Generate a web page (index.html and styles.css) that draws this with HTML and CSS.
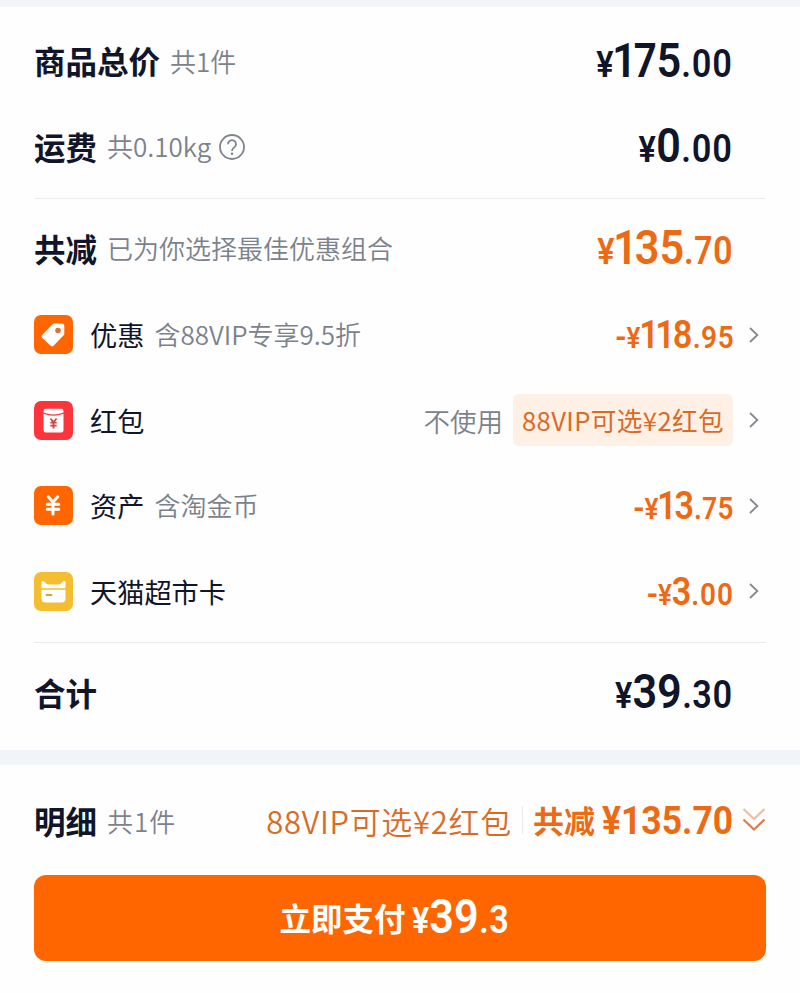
FILE: index.html
```html
<!DOCTYPE html>
<html lang="zh-CN">
<head>
  <meta charset="UTF-8">
  <title>确认订单</title>
  <link rel="stylesheet" href="styles.css">
</head>
<body>
  <!-- Price summary -->
  <div class="summary">
    <div class="row">
      <h2>商品总价</h2>
      <span class="note">共1件</span>
      <div class="price"><span class="yen">¥</span><span class="int">175</span><span class="dec">.00</span></div>
    </div>
    <div class="row">
      <h2>运费</h2>
      <span class="note">共0.10kg</span>
      <svg class="help" viewBox="0 0 26 26">
        <circle cx="13" cy="13" r="12"/>
        <path d="M9 10.200a4 4 0 1 1 6.200 3.300c-1.500 1-2.200 1.700-2.200 3.500"/>
        <circle class="dot" cx="13" cy="19.700" r="1.300"/>
      </svg>
      <div class="price"><span class="yen">¥</span><span class="int">0</span><span class="dec">.00</span></div>
    </div>
    <hr>
    <div class="row">
      <h2>共减</h2>
      <span class="note">已为你选择最佳优惠组合</span>
      <div class="price orange"><span class="yen">¥</span><span class="int">135</span><span class="dec">.70</span></div>
    </div>

    <!-- Discount items -->
    <div class="row item">
      <svg class="icon" viewBox="0 0 39 39">
        <rect width="39" height="39" rx="7" fill="#ff6600"/>
        <path d="M20.500 8.500h7.200a2.600 2.600 0 0 1 2.600 2.600v7.300a3 3 0 0 1-.9 2.100l-9.600 10a2.400 2.400 0 0 1-3.400 0l-8.200-7.400a2.200 2.200 0 0 1 0-3.200l10.100-10.500a3 3 0 0 1 2.200-.9z" fill="#fff"/>
        <circle cx="24" cy="15.500" r="2.800" fill="#e0703a"/>
      </svg>
      <h3>优惠</h3>
      <span class="note">含88VIP专享9.5折</span>
      <div class="price small orange"><span class="minus">-</span><span class="yen">¥</span><span class="int">118</span><span class="dec">.95</span></div>
      <svg class="arrow" viewBox="0 0 10 16"><path d="M1 1l7.400 7L1 15"/></svg>
    </div>
    <div class="row item">
      <svg class="icon" viewBox="0 0 39 39">
        <rect width="39" height="39" rx="7" fill="#fc343c"/>
        <path d="M9.500 11.500V10q0-2.200 2.200-2.200h15.600q2.200 0 2.200 2.200v1.500q-10 4-20 0z" fill="#fff"/>
        <path d="M9.500 12.700q10 4 20 0v16.600q0 2.200-2.200 2.200H11.700q-2.200 0-2.200-2.200z" fill="#fff"/>
        <path d="M16.400 17.500l3.100 3.600 3.100-3.600M19.500 21v6.600M16.300 21.600h6.400M16.300 24.600h6.400" fill="none" stroke="#d94345" stroke-width="1.800"/>
      </svg>
      <h3>红包</h3>
      <span class="unused">不使用</span>
      <span class="tag">88VIP可选¥2红包</span>
      <svg class="arrow" viewBox="0 0 10 16"><path d="M1 1l7.400 7L1 15"/></svg>
    </div>
    <div class="row item">
      <svg class="icon" viewBox="0 0 39 39">
        <rect width="39" height="39" rx="7" fill="#ff6600"/>
        <path d="M14.300 10.800l4.700 5.400 4.700-5.400M19 16.500V28M13.200 18.200h11.600M13.200 23.200h11.600" fill="none" stroke="#fff" stroke-width="3" stroke-linecap="round"/>
      </svg>
      <h3>资产</h3>
      <span class="note">含淘金币</span>
      <div class="price small orange"><span class="minus">-</span><span class="yen">¥</span><span class="int">13</span><span class="dec">.75</span></div>
      <svg class="arrow" viewBox="0 0 10 16"><path d="M1 1l7.400 7L1 15"/></svg>
    </div>
    <div class="row item">
      <svg class="icon" viewBox="0 0 39 39">
        <rect width="39" height="39" rx="7" fill="#f4be30"/>
        <path d="M7.500 16.300V10.400c0-1.600 1.500-2 2.600-.9l2.300 2.300q.8.800 2 .8h10.200q1.200 0 2-.8l2.300-2.300c1.100-1.100 2.600-.7 2.600.9v5.900z" fill="#fff"/>
        <path d="M7.500 17.800h24v8.700q0 4-4 4h-16q-4 0-4-4z" fill="#fff"/>
        <path d="M12.500 23h5" stroke="#d9a530" stroke-width="1.800" stroke-linecap="round"/>
      </svg>
      <h3>天猫超市卡</h3>
      <div class="price small orange"><span class="minus">-</span><span class="yen">¥</span><span class="int">3</span><span class="dec">.00</span></div>
      <svg class="arrow" viewBox="0 0 10 16"><path d="M1 1l7.400 7L1 15"/></svg>
    </div>
    <hr>
    <div class="row">
      <h2>合计</h2>
      <div class="price"><span class="yen">¥</span><span class="int">39</span><span class="dec">.30</span></div>
    </div>
  </div>

  <!-- Bottom pay bar -->
  <div class="pay">
    <div class="detail">
      <h2>明细</h2>
      <span class="note">共1件</span>
      <span class="hint">88VIP可选¥2红包</span>
      <span class="saved">共减</span>
      <span class="total">¥135.70</span>
      <svg class="fold" viewBox="0 0 24 26">
        <path class="light" d="M1.500 2L12 12 22.500 2"/>
        <path d="M1.500 12.500L12 22.500 22.500 12.500"/>
      </svg>
    </div>
    <button class="pay-btn">立即支付<span class="price"><span class="yen">¥</span><span class="int">39</span><span class="dec">.3</span></span></button>
  </div>
</body>
</html>
```
FILE: styles.css
```css
body {
  margin: 0;
  background: #f1f5f9;
  color: #11152a;
  font-family: "Noto Sans CJK SC", sans-serif;
}
h2, h3 {
  margin: 0;
  padding-bottom: 3px;
  white-space: nowrap;
}
h2 {
  font-size: 31.5px;
  font-weight: 700;
}
h3 {
  padding-bottom: 1px;
  font-size: 27.2px;
  font-weight: 400;
}

/* Price summary */
.summary {
  box-sizing: border-box;
  height: 743px;
  margin-top: 7px;
  padding: 12px 34px 0;
  background: #fefefe;
}
.row {
  display: flex;
  align-items: center;
  height: 85.4px;
}
hr {
  height: 1px;
  margin: 8px 0;
  border: none;
  background: #e9ebee;
}
.note {
  margin-left: 10px;
  padding-bottom: 3px;
  font-size: 26px;
  font-weight: 350;
  color: #7c828c;
  white-space: nowrap;
}
.help {
  width: 26px;
  height: 26px;
  margin-left: 8px;
  fill: none;
  stroke: #80858d;
  stroke-width: 1.8;
}
.help .dot {
  fill: #80858d;
  stroke: none;
}

/* Prices */
.price {
  margin-left: auto;
  margin-right: 33px;
  padding-top: 9px;
  font-family: Roboto, sans-serif;
  font-weight: 600;
  font-feature-settings: "pnum";
  line-height: 56px;
  white-space: nowrap;
  transform: scaleX(.9);
  transform-origin: right;
}
.price .yen {
  font-size: 36px;
}
.price .int {
  font-size: 48px;
}
.price .dec {
  font-size: 38px;
  letter-spacing: .5px;
}
.orange {
  color: #ed6a14;
}
.item .icon {
  width: 39px;
  height: 39px;
  margin-right: 17px;
}
.item .price {
  margin-right: 15px;
}
.small .minus {
  font-size: 34px;
}
.small .yen {
  font-size: 29px;
}
.small .int {
  font-size: 38px;
}
.small .dec {
  font-size: 31px;
}
.arrow {
  width: 10px;
  height: 16px;
  margin-right: 7px;
  fill: none;
  stroke: #858991;
  stroke-width: 1.8;
}
.unused {
  margin-left: auto;
  font-size: 26.5px;
  font-weight: 350;
  color: #7c828c;
}
.tag {
  margin: 0 16px 0 10px;
  padding: 0 9px;
  border-radius: 6px;
  background: #fff0e5;
  color: #d96b28;
  font-size: 25.6px;
  line-height: 52px;
  letter-spacing: .4px;
}

/* Bottom pay bar */
.pay {
  height: 228px;
  margin-top: 15px;
  padding: 0 34px;
  background: #fefefe;
}
.detail {
  display: flex;
  align-items: center;
  height: 110px;
}
.detail .note {
  padding-bottom: 0;
  letter-spacing: 1px;
}
.detail h2 {
  padding-bottom: 0;
}
.hint {
  margin-left: auto;
  font-size: 31px;
  font-weight: 350;
  letter-spacing: .7px;
  color: #d96b28;
}
.saved {
  margin-left: 10px;
  padding-left: 10px;
  border-left: 1px solid #e9ebee;
  font-size: 31px;
  font-weight: 700;
  line-height: 28px;
  color: #ed6a14;
}
.total {
  margin-left: -6px;
  padding-top: 2px;
  font-family: Roboto, sans-serif;
  font-size: 39px;
  font-weight: 700;
  color: #ed6a14;
  transform: scaleX(.91);
  transform-origin: right;
}
.fold {
  width: 24px;
  height: 26px;
  margin-left: 9px;
  fill: none;
  stroke: #dc7b4b;
  stroke-width: 2.2;
}
.fold .light {
  stroke: #eebda6;
}
.pay-btn {
  display: flex;
  align-items: center;
  justify-content: center;
  width: 100%;
  height: 86px;
  padding-bottom: 3px;
  border: none;
  border-radius: 12px;
  background: #ff6600;
  color: #fff;
  font-family: inherit;
  font-size: 31.5px;
  font-weight: 700;
}
.pay-btn .price {
  margin: 0 0 0 7px;
  padding-top: 5px;
  transform-origin: left;
}
```
